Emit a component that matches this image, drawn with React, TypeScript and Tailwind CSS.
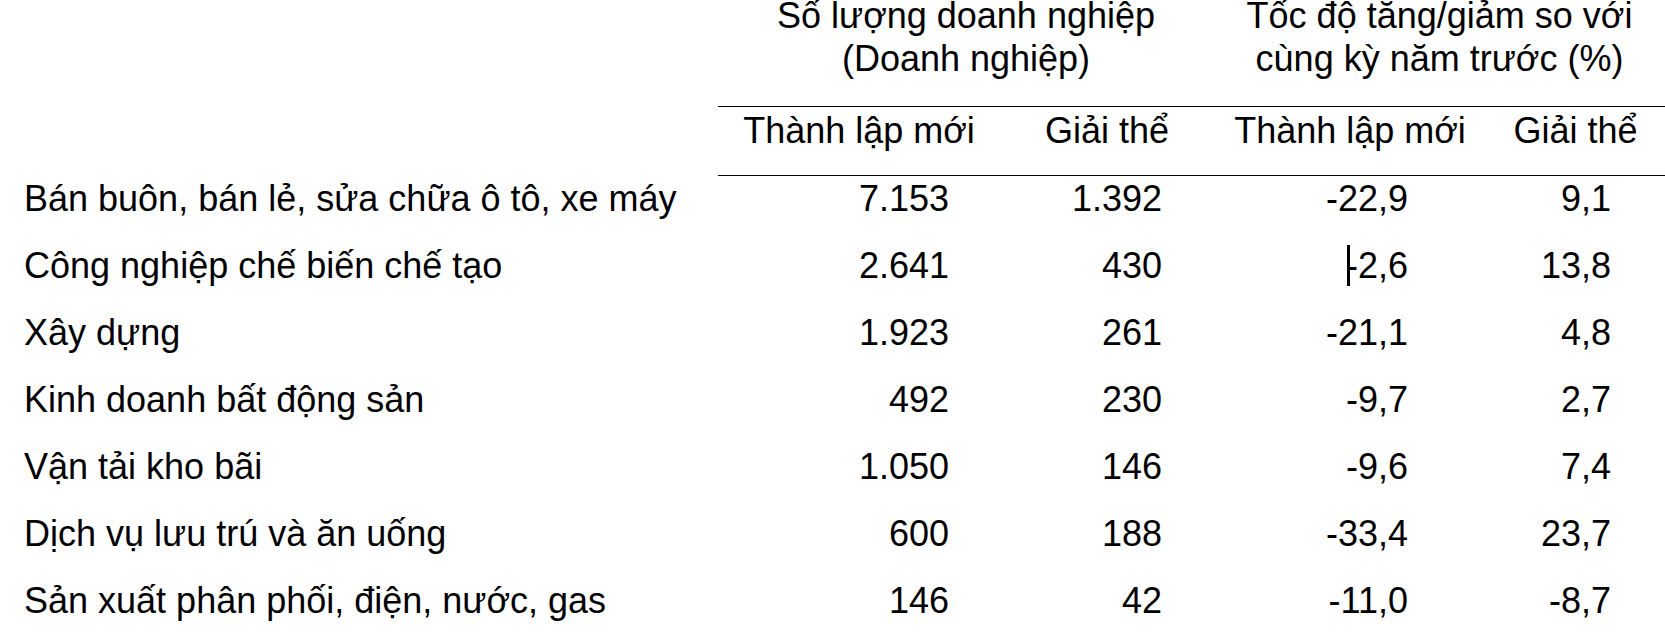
import React from "react";

const rows: { label: string; v: string[] }[] = [
  { label: "Bán buôn, bán lẻ, sửa chữa ô tô, xe máy", v: ["7.153", "1.392", "-22,9", "9,1"] },
  { label: "Công nghiệp chế biến chế tạo", v: ["2.641", "430", "-2,6", "13,8"] },
  { label: "Xây dựng", v: ["1.923", "261", "-21,1", "4,8"] },
  { label: "Kinh doanh bất động sản", v: ["492", "230", "-9,7", "2,7"] },
  { label: "Vận tải kho bãi", v: ["1.050", "146", "-9,6", "7,4"] },
  { label: "Dịch vụ lưu trú và ăn uống", v: ["600", "188", "-33,4", "23,7"] },
  { label: "Sản xuất phân phối, điện, nước, gas", v: ["146", "42", "-11,0", "-8,7"] },
];

const pads = ["pr-[51px]", "pr-[52px]", "pr-[78px]", "pr-[54px]"];

export default function App() {
  return (
    <div
      className="w-[1665px] h-[636px] overflow-hidden bg-white text-black text-[36px]"
      style={{ fontFamily: '"Liberation Sans", Arial, sans-serif' }}
    >
      <div className="grid grid-cols-[718px_282px_214px_272px_179px]">
        {/* group headers */}
        <div className="h-[107px]" />
        <div className="col-span-2 h-[107px] border-b border-black text-center">
          <div className="leading-[31px]">Số lượng doanh nghiệp</div>
          <div className="mt-[6px] leading-[44px]">(Doanh nghiệp)</div>
        </div>
        <div className="col-span-2 h-[107px] border-b border-black text-center">
          <div className="leading-[31px]">Tốc độ tăng/giảm so với</div>
          <div className="mt-[6px] leading-[44px]">cùng kỳ năm trước (%)</div>
        </div>

        {/* sub headers */}
        <div className="h-[69px]" />
        <div className="h-[69px] border-b border-black pt-[3px] leading-[41px] text-center">Thành lập mới</div>
        <div className="h-[69px] border-b border-black pt-[3px] leading-[41px] text-center">Giải thể</div>
        <div className="h-[69px] border-b border-black pt-[3px] leading-[41px] text-center">Thành lập mới</div>
        <div className="h-[69px] border-b border-black pt-[3px] leading-[41px] text-center">Giải thể</div>

        {/* body */}
        {rows.map((r, i) => (
          <React.Fragment key={i}>
            <div className="h-[67px] pt-[2px] pl-[24px] leading-[41px] whitespace-nowrap">{r.label}</div>
            {r.v.map((val, j) => (
              <div key={j} className={`h-[67px] pt-[2px] leading-[41px] text-right ${pads[j]}`}>
                {i === 1 && j === 2 ? (
                  <span className="relative inline-block">
                    <span className="absolute left-[1px] top-0 h-[41px] w-[3px] bg-black" />
                    {val}
                  </span>
                ) : (
                  val
                )}
              </div>
            ))}
          </React.Fragment>
        ))}
      </div>
    </div>
  );
}
